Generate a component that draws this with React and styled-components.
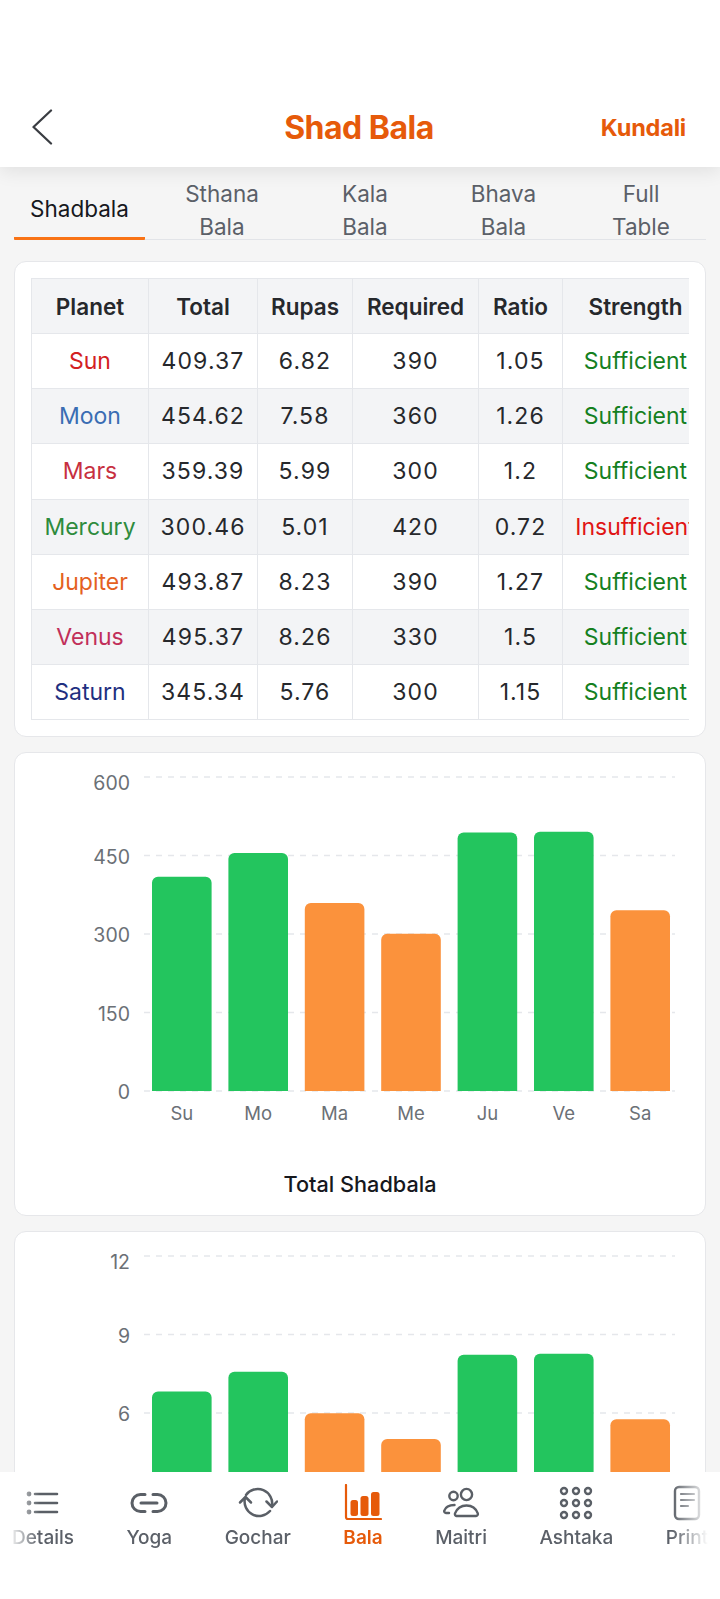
import React from 'react';
import styled, { createGlobalStyle } from 'styled-components';

const FONT = `Inter, "Noto Sans", "Liberation Sans", sans-serif`;
const ORANGE = '#e65a0a';
const ICON_GREY = '#5a5f66';

const GlobalStyle = createGlobalStyle`
    html, body {
        margin: 0;
        padding: 0;
        background: #fff;
        font-family: ${FONT};
    }
`;

const Page = styled.div`
    width: 720px;
    height: 1599px;
    display: flex;
    flex-direction: column;
    overflow: hidden;
    background: #f5f5f5;
`;

const Header = styled.header`
    position: relative;
    z-index: 2;
    flex: none;
    height: 80px;
    padding: 87px 34px 0 32px;
    display: grid;
    grid-template-columns: 1fr auto 1fr;
    align-items: center;
    background: #fff;
    box-shadow: 0 4px 18px rgba(0, 0, 0, 0.09);
`;

const BackButton = styled.button`
    width: 24px;
    height: 36px;
    padding: 0;
    border: 0;
    background: none;
    display: flex;
`;

const Title = styled.h1`
    margin: 0;
    font-size: 32px;
    font-weight: 700;
    letter-spacing: -0.5px;
    color: ${ORANGE};
`;

const HeaderLink = styled.span`
    justify-self: end;
    font-size: 23.5px;
    font-weight: 700;
    letter-spacing: -0.2px;
    color: ${ORANGE};
`;

const Tabs = styled.nav`
    flex: none;
    margin: 0 14px;
    height: 72px;
    display: grid;
    grid-template-columns: 131px 154px 132px 145px 130px;
    border-bottom: 1px solid #e2e4e8;
`;

const Tab = styled.div`
    box-sizing: border-box;
    height: 73px;
    padding-top: 12px;
    display: flex;
    align-items: center;
    justify-content: center;
    text-align: center;
    font-size: 22.5px;
    line-height: 33px;
    color: ${p => (p.$active ? '#16181d' : '#5b6068')};
    border-bottom: ${p => (p.$active ? '3px solid #f97316' : '0')};
    border-radius: 1px;
`;

const Content = styled.main`
    flex: 1;
    min-height: 0;
    overflow: hidden;
    padding: 21px 14px 0;
    display: flex;
    flex-direction: column;
    gap: 15px;
`;

const Card = styled.section`
    flex: none;
    background: #fff;
    border: 1px solid #e6e7ea;
    border-radius: 12px;
`;

const TableCard = styled(Card)`
    padding: 16px;
`;

const TableClip = styled.div`
    overflow: hidden;
`;

const Table = styled.table`
    width: 677px;
    table-layout: fixed;
    border-collapse: collapse;
    font-size: 23px;
    color: #26282c;
`;

const Th = styled.th`
    height: 54px;
    padding: 0;
    background: #f3f4f6;
    border: 1px solid #e5e7eb;
    font-size: 22.5px;
    font-weight: 600;
    text-align: center;
`;

const Td = styled.td`
    height: 54.2px;
    padding: 0;
    background: ${p => (p.$striped ? '#f3f4f6' : '#fff')};
    border: 1px solid #e5e7eb;
    text-align: center;
    white-space: nowrap;
    letter-spacing: ${p => (p.$number ? '1.1px' : '0')};
    color: ${p => p.$color || 'inherit'};
`;

const ChartTitle = styled.div`
    margin-top: 34px;
    height: 34px;
    line-height: 34px;
    text-align: center;
    font-size: 21.7px;
    font-weight: 500;
    color: #16181d;
`;

const ChartCard = styled(Card)`
    height: 462px;
`;

const ChartSvg = styled.svg`
    display: block;
`;

const BottomNav = styled.nav`
    flex: none;
    height: 127px;
    background: #fff;
`;

const NavScroller = styled.div`
    display: flex;
    gap: 52.5px;
    padding: 11px 0 0 12px;
    mask-image: linear-gradient(to right, transparent 8px, #000 40px, #000 672px, transparent 708px);
`;

const NavItem = styled.div`
    flex: none;
    display: flex;
    flex-direction: column;
    align-items: center;
    gap: 1px;
    font-size: 19px;
    line-height: 28px;
    font-weight: ${p => (p.$active ? 600 : 500)};
    color: ${p => (p.$active ? ORANGE : '#5b6068')};
`;

const IconBox = styled.div`
    height: 40px;
    display: flex;
    align-items: center;
    justify-content: center;
`;

const planets = [
    { name: 'Sun', color: '#d3201f', total: '409.37', rupas: '6.82', required: 390, ratio: '1.05' },
    { name: 'Moon', color: '#3a6db3', total: '454.62', rupas: '7.58', required: 360, ratio: '1.26' },
    { name: 'Mars', color: '#c7303f', total: '359.39', rupas: '5.99', required: 300, ratio: '1.2' },
    { name: 'Mercury', color: '#2e8b3d', total: '300.46', rupas: '5.01', required: 420, ratio: '0.72', low: true },
    { name: 'Jupiter', color: '#e4611f', total: '493.87', rupas: '8.23', required: 390, ratio: '1.27' },
    { name: 'Venus', color: '#c12f5a', total: '495.37', rupas: '8.26', required: 330, ratio: '1.5' },
    { name: 'Saturn', color: '#1f2f80', total: '345.34', rupas: '5.76', required: 300, ratio: '1.15' }
];

const columnWidths = [117, 109, 95, 126, 84, 146];
const headings = ['Planet', 'Total', 'Rupas', 'Required', 'Ratio', 'Strength'];
const barLabels = ['Su', 'Mo', 'Ma', 'Me', 'Ju', 'Ve', 'Sa'];
const tabs = [['Shadbala'], ['Sthana', 'Bala'], ['Kala', 'Bala'], ['Bhava', 'Bala'], ['Full', 'Table']];

const barColor = planet => (['Sun', 'Moon', 'Jupiter', 'Venus'].includes(planet.name) ? '#23c55e' : '#fb923c');

const BarChart = ({ ticks, max, field, height }) => {
    const top = 24;
    const plot = 314;
    const scale = value => top + plot - (value / max) * plot;

    return (
        <ChartSvg width="690" height={height} fontFamily={FONT}>
            {ticks.map(tick => (
                <g key={tick}>
                    <line x1="129" x2="660" y1={scale(tick)} y2={scale(tick)} stroke="#e5e7eb" strokeWidth="1.5" strokeDasharray="6 6" />
                    <text x="115" y={Math.max(scale(tick), top + 5) + 8} textAnchor="end" fontSize="19.5" fill="#6b7076">{tick}</text>
                </g>
            ))}
            {planets.map((planet, i) => {
                const x = 137 + i * 76.4;
                const y = scale(parseFloat(planet[field]));
                return (
                    <g key={planet.name}>
                        <path
                            d={`M${x} ${top + plot}V${y + 6}a6 6 0 0 1 6 -6h47.6a6 6 0 0 1 6 6V${top + plot}z`}
                            fill={barColor(planet)}
                        />
                        <text x={x + 29.8} y={top + plot + 29} textAnchor="middle" fontSize="18.5" fill="#6b7076">{barLabels[i]}</text>
                    </g>
                );
            })}
        </ChartSvg>
    );
};

const BackIcon = () => (
    <svg width="24" height="36" viewBox="0 0 24 36" fill="none" stroke="#3a3d42" strokeWidth="2.3" strokeLinecap="round" strokeLinejoin="round">
        <path d="M19 1.5 1.5 18 19 34.5" />
    </svg>
);

const DetailsIcon = () => (
    <svg width="36" height="28" viewBox="0 0 36 28" fill="none" stroke={ICON_GREY} strokeWidth="2.6" strokeLinecap="round">
        <path d="M10 5h22M10 14h22M10 23h22" />
        <g fill={ICON_GREY} stroke="none">
            <circle cx="4" cy="5" r="2.4" />
            <circle cx="4" cy="14" r="2.4" />
            <circle cx="4" cy="23" r="2.4" />
        </g>
    </svg>
);

const YogaIcon = () => (
    <svg width="38" height="22" viewBox="0 0 38 22" fill="none" stroke={ICON_GREY} strokeWidth="3" strokeLinecap="round">
        <path d="M15 2.5H10.5a8.5 8.5 0 0 0 0 17H15" />
        <path d="M23 2.5h4.5a8.5 8.5 0 0 1 0 17H23" />
        <path d="M11 11h16" />
    </svg>
);

const GocharIcon = () => (
    <svg width="40" height="40" viewBox="0 0 40 40" fill="none" stroke={ICON_GREY} strokeWidth="2.5" strokeLinecap="round" strokeLinejoin="round">
        <path d="M8 12A14.5 14.5 0 0 1 34 23" />
        <path d="M28.5 18.5l5.5 5.5 5-5.5" />
        <path d="M32 28A14.5 14.5 0 0 1 7 15" />
        <path d="M2 19.5 7.5 14l5.5 5.5" />
    </svg>
);

const BalaIcon = () => (
    <svg width="38" height="38" viewBox="0 0 38 38" fill="none">
        <path d="M2 1v32a2 2 0 0 0 2 2h33" stroke={ORANGE} strokeWidth="2.2" strokeLinecap="round" />
        <g fill={ORANGE}>
            <rect x="6.5" y="16" width="7.5" height="16" rx="2.5" />
            <rect x="16.5" y="12" width="8" height="20" rx="2.5" />
            <rect x="27" y="8" width="8.5" height="24" rx="2.5" />
        </g>
    </svg>
);

const MaitriIcon = () => (
    <svg width="38" height="36" viewBox="0 0 38 36" fill="none" stroke={ICON_GREY} strokeWidth="2.4" strokeLinecap="round" strokeLinejoin="round">
        <circle cx="11.5" cy="11" r="4.2" />
        <circle cx="24.5" cy="9.5" r="5.6" />
        <path d="M7 28H4a1.8 1.8 0 0 1-1.8-2.2C3.5 22 7 20 12.5 20" />
        <path d="M14.5 31h19.5a2 2 0 0 0 1.8-2.6C34 23.5 30 20.5 24.5 20.5S15 23.5 13 28.4A2 2 0 0 0 14.5 31z" />
    </svg>
);

const AshtakaIcon = () => (
    <svg width="34" height="34" viewBox="0 0 34 34" fill="none" stroke={ICON_GREY} strokeWidth="2.4">
        {[5, 17, 29].map(cy => [5, 17, 29].map(cx => <circle key={`${cx}-${cy}`} cx={cx} cy={cy} r="3" />))}
    </svg>
);

const PrintIcon = () => (
    <svg width="28" height="36" viewBox="0 0 28 36" fill="none" stroke={ICON_GREY} strokeLinecap="round">
        <rect x="2" y="2" width="24" height="32" rx="4" strokeWidth="2.4" />
        <path d="M8 9h13M8 15h13M8 21h7" strokeWidth="2.2" />
    </svg>
);

const navItems = [
    { label: 'Details', icon: <DetailsIcon /> },
    { label: 'Yoga', icon: <YogaIcon /> },
    { label: 'Gochar', icon: <GocharIcon /> },
    { label: 'Bala', icon: <BalaIcon />, active: true },
    { label: 'Maitri', icon: <MaitriIcon /> },
    { label: 'Ashtaka', icon: <AshtakaIcon /> },
    { label: 'Print', icon: <PrintIcon /> }
];

const App = () => {
    return (
        <Page>
            <GlobalStyle />
            <Header>
                <BackButton><BackIcon /></BackButton>
                <Title>Shad Bala</Title>
                <HeaderLink>Kundali</HeaderLink>
            </Header>

            <Tabs>
                {tabs.map((lines, i) => (
                    <Tab key={lines.join(' ')} $active={i === 0}>
                        <span>{lines[0]}{lines[1] && <br />}{lines[1]}</span>
                    </Tab>
                ))}
            </Tabs>

            <Content>
                <TableCard>
                    <TableClip>
                        <Table>
                            <colgroup>
                                {columnWidths.map((width, i) => <col key={i} style={{ width }} />)}
                            </colgroup>
                            <thead>
                                <tr>{headings.map(heading => <Th key={heading}>{heading}</Th>)}</tr>
                            </thead>
                            <tbody>
                                {planets.map((planet, i) => (
                                    <tr key={planet.name}>
                                        <Td $striped={i % 2 === 1} $color={planet.color}>{planet.name}</Td>
                                        <Td $striped={i % 2 === 1} $number>{planet.total}</Td>
                                        <Td $striped={i % 2 === 1} $number>{planet.rupas}</Td>
                                        <Td $striped={i % 2 === 1} $number>{planet.required}</Td>
                                        <Td $striped={i % 2 === 1} $number>{planet.ratio}</Td>
                                        <Td $striped={i % 2 === 1} $color={planet.low ? '#e01414' : '#15801f'}>
                                            {planet.low ? 'Insufficient' : 'Sufficient'}
                                        </Td>
                                    </tr>
                                ))}
                            </tbody>
                        </Table>
                    </TableClip>
                </TableCard>

                <ChartCard>
                    <BarChart ticks={[600, 450, 300, 150, 0]} max={600} field="total" height={380} />
                    <ChartTitle>Total Shadbala</ChartTitle>
                </ChartCard>

                <ChartCard>
                    <BarChart ticks={[12, 9, 6, 3, 0]} max={12} field="rupas" height={380} />
                    <ChartTitle>Rupas</ChartTitle>
                </ChartCard>
            </Content>

            <BottomNav>
                <NavScroller>
                    {navItems.map(item => (
                        <NavItem key={item.label} $active={item.active}>
                            <IconBox>{item.icon}</IconBox>
                            {item.label}
                        </NavItem>
                    ))}
                </NavScroller>
            </BottomNav>
        </Page>
    );
};

export default App;
